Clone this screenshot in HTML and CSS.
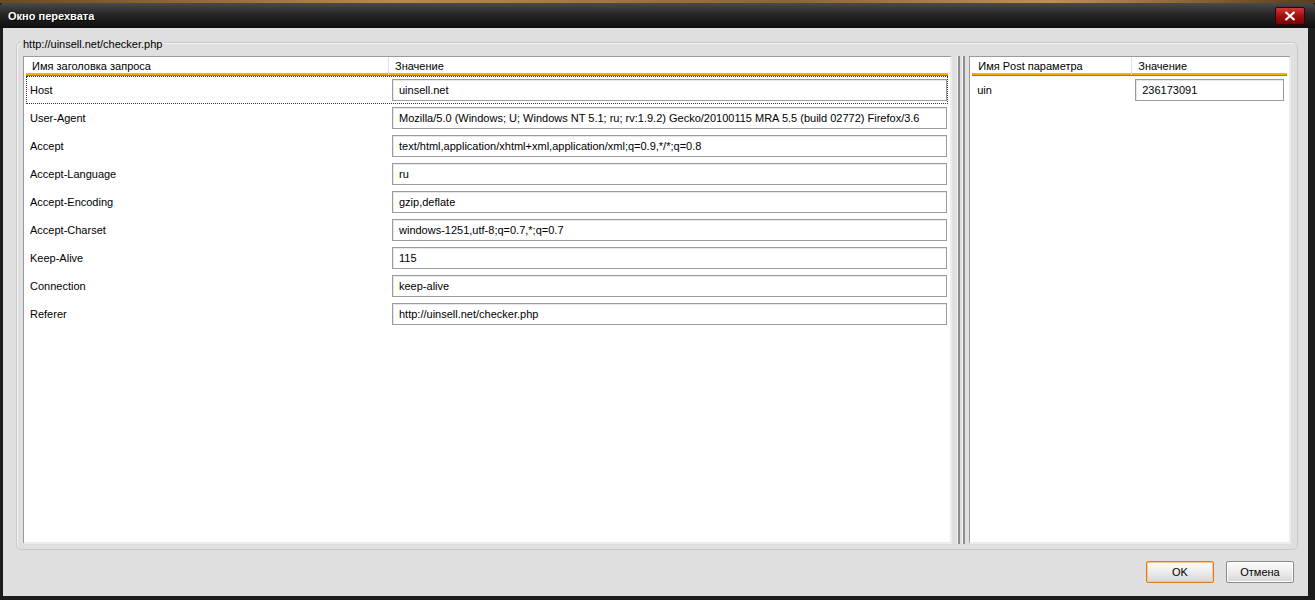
FILE: index.html
```html
<!DOCTYPE html>
<html lang="ru">
<head>
  <meta charset="UTF-8">
  <title>Окно перехвата</title>
  <link rel="stylesheet" href="styles.css">
</head>
<body>

<div class="window">
  <div class="topstrip"></div>
  <div class="titlebar">
    <span class="title">Окно перехвата</span>
    <span class="close">
      <svg width="12" height="10" viewBox="0 0 12 10"><path d="M1.5 1 L10.5 9 M10.5 1 L1.5 9" stroke="#fff" stroke-width="2.2"/></svg>
    </span>
  </div>

  <div class="body">
    <div class="group">
      <div class="legend">http://uinsell.net/checker.php</div>
      <div class="panes">
        <div class="list left">
          <div class="head">
            <div class="col name">Имя заголовка запроса</div>
            <div class="col value">Значение</div>
          </div>
          <div class="row focus"><div class="name">Host</div><div class="value"><div class="field">uinsell.net</div></div></div>
          <div class="row"><div class="name">User-Agent</div><div class="value"><div class="field">Mozilla/5.0 (Windows; U; Windows NT 5.1; ru; rv:1.9.2) Gecko/20100115 MRA 5.5 (build 02772) Firefox/3.6</div></div></div>
          <div class="row"><div class="name">Accept</div><div class="value"><div class="field">text/html,application/xhtml+xml,application/xml;q=0.9,*/*;q=0.8</div></div></div>
          <div class="row"><div class="name">Accept-Language</div><div class="value"><div class="field">ru</div></div></div>
          <div class="row"><div class="name">Accept-Encoding</div><div class="value"><div class="field">gzip,deflate</div></div></div>
          <div class="row"><div class="name">Accept-Charset</div><div class="value"><div class="field">windows-1251,utf-8;q=0.7,*;q=0.7</div></div></div>
          <div class="row"><div class="name">Keep-Alive</div><div class="value"><div class="field">115</div></div></div>
          <div class="row"><div class="name">Connection</div><div class="value"><div class="field">keep-alive</div></div></div>
          <div class="row"><div class="name">Referer</div><div class="value"><div class="field">http://uinsell.net/checker.php</div></div></div>
        </div>

        <div class="splitter"><span></span><span></span></div>

        <div class="list right">
          <div class="head">
            <div class="col name">Имя Post параметра</div>
            <div class="col value">Значение</div>
          </div>
          <div class="row"><div class="name">uin</div><div class="value"><div class="field">236173091</div></div></div>
        </div>
      </div>
    </div>

    <div class="buttons">
      <button class="btn default">OK</button>
      <button class="btn">Отмена</button>
    </div>
  </div>
</div>

</body>
</html>
```

FILE: styles.css
```css
body { margin: 0; font-family: "Liberation Sans", Arial, sans-serif; font-size: 11px; color: #000; background: #111; }

.window {
  width: 1315px; height: 600px; box-sizing: border-box;
  display: flex; flex-direction: column;
  background: #dfdfdf;
  border-left: 3px solid #1c1c1c; border-right: 7px solid #1c1c1c; border-bottom: 4px solid #1c1c1c;
}
.topstrip { height: 3px; margin: 0 -7px 0 -3px; background: linear-gradient(90deg, #6b4a22, #b98a45 30%, #8a6630 60%, #c09050 80%, #5a3d1c); }
.titlebar {
  height: 25px; display: flex; align-items: center; justify-content: space-between;
  background: linear-gradient(#4a4a4a, #262626 45%, #0e0e0e);
  border-radius: 4px 4px 0 0;
  margin: 0 -7px 0 -3px; padding-left: 8px; padding-right: 10px;
}
.title { color: #fff; font-weight: bold; font-size: 11px; text-shadow: 1px 1px 0 #000; }
.close {
  width: 28px; height: 16px; display: flex; align-items: center; justify-content: center;
  background: linear-gradient(#d03838, #a01010 50%, #7a0000);
  border: 1px solid #3a0000; border-radius: 2px; margin-top: 1px;
}

.body { flex: 1; display: flex; flex-direction: column; padding: 14px 10px 0 13px; }

.group {
  height: 508px; box-sizing: border-box; position: relative;
  border: 1px solid #c8c8c8; border-radius: 5px;
  box-shadow: inset 1px 1px 0 #f6f6f6;
  padding: 13px 6px 5px 6px;
}
.legend { position: absolute; top: -5px; left: 4px; padding: 0 2px; background: #dfdfdf; line-height: 12px; }

.panes { display: flex; height: 100%; }
.list {
  background: #fff; box-sizing: border-box;
  border-left: 1px solid #9a9a9a; border-top: 1px solid #9a9a9a;
  border-right: 2px solid #ececec; border-bottom: 2px solid #ececec;
}
.list.left { width: 930px; }
.list.right { width: 322px; }

.splitter { width: 17px; display: flex; justify-content: center; gap: 2px; }
.splitter span { width: 2px; background: #8c8c8c; border-left: 1px solid #f4f4f4; }

.head { display: flex; height: 18px; margin: 0 2px; border-bottom: 1px solid #e06000; box-shadow: 0 -2px 0 #f8b000 inset; }
.head .col { line-height: 18px; padding-left: 6px; box-sizing: border-box; }
.left .head .name { width: 363px; border-right: 1px solid #e0e0e0; }
.right .head .name { width: 160px; border-right: 1px solid #e0e0e0; }

.row { display: flex; height: 28px; align-items: center; margin: 0 2px; box-sizing: border-box; }
.row.focus { outline: 1px dotted #333; outline-offset: -1px; }
.row .name { padding-left: 4px; box-sizing: border-box; }
.left .row .name { width: 366px; }
.right .row .name { width: 163px; padding-left: 5px; }
.left .row .value { width: 555px; }
.right .row .value { width: 149px; }
.field {
  height: 22px; box-sizing: border-box; line-height: 20px; padding-left: 6px;
  border: 1px solid #9c9c9c; box-shadow: inset 1px 1px 0 #e8e8e8;
  white-space: nowrap; overflow: hidden;
}

.buttons { display: flex; justify-content: flex-end; gap: 12px; padding: 11px 4px 0 0; }
.btn {
  width: 68px; height: 22px; font-family: inherit; font-size: 11px; color: #000;
  background: linear-gradient(#fbfbfb, #ececec 50%, #d6d6d6);
  border: 1px solid #8a8a8a; border-radius: 2px;
  box-shadow: inset 0 0 0 1px #fff;
}
.btn.default { border-color: #e07a20; box-shadow: inset 0 0 0 1px #f6c78e; }
```
